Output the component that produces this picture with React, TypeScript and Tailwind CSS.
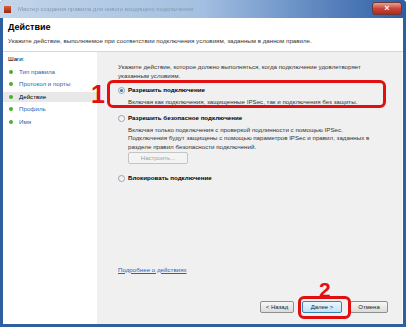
import React from 'react'

const steps = [
  { label: 'Тип правила', active: false },
  { label: 'Протокол и порты', active: false },
  { label: 'Действие', active: true },
  { label: 'Профиль', active: false },
  { label: 'Имя', active: false },
]

function Radio({ checked }: { checked?: boolean }) {
  return (
    <span className="w-[7px] h-[7px] rounded-full border border-[#9aa3ad] bg-gradient-to-br from-[#e8e8e8] to-[#ffffff] flex items-center justify-center shrink-0">
      {checked && <span className="w-[3px] h-[3px] rounded-full bg-[#3a74c4]" />}
    </span>
  )
}

function Btn({ children, primary, disabled }: { children: React.ReactNode; primary?: boolean; disabled?: boolean }) {
  return (
    <div
      className={
        'h-[12px] rounded-[2px] border flex items-center justify-center text-[6px] leading-none ' +
        (primary
          ? 'border-[#3c7fb1] bg-gradient-to-b from-[#eaf6fd] to-[#bee6fd] text-[#222]'
          : disabled
            ? 'border-[#c4c4c4] bg-[#f4f4f4] text-[#a0a0a0]'
            : 'border-[#8e8f8f] bg-gradient-to-b from-[#f6f6f6] to-[#dcdcdc] text-[#222]')
      }
    >
      {children}
    </div>
  )
}

export default function App() {
  return (
    <div className="w-[408px] h-[330px] bg-white relative overflow-hidden" style={{ fontFamily: '"Liberation Sans", Arial, sans-serif' }}>
      <div className="w-[406px] h-[327px] flex flex-col bg-[#2f5f9e] rounded-t-[4px] overflow-hidden">
        {/* title bar */}
        <div className="h-[18px] flex items-center bg-gradient-to-r from-[#c3d6ea] via-[#a3bfe1] to-[#2c5ea6] px-[3px] relative">
          <div className="w-[9px] h-[9px] rounded-[1px] bg-gradient-to-b from-[#e45c3a] to-[#8a2a1a] border border-[#c9d6e4] shrink-0" />
          <span className="ml-[6px] text-[6px] text-[#8797aa] blur-[0.5px] whitespace-nowrap">Мастер создания правила для нового входящего подключения</span>
          <div className="absolute right-[4px] top-[2px] w-[30px] h-[13px] rounded-[3px] border border-[#6b3a3a] bg-gradient-to-b from-[#e8a093] via-[#c9453a] to-[#b52a20] flex items-center justify-center text-white text-[9px] font-bold leading-none">
            ×
          </div>
        </div>

        {/* body */}
        <div className="flex-1 mx-[3px] mb-[3px] bg-white flex flex-col">
          <div className="h-[34px] border-b border-[#d8d8d8] px-[5px] pt-[3px]">
            <div className="text-[9px] font-bold text-black leading-[12px]">Действие</div>
            <div className="text-[6.2px] text-[#333] mt-[4px] leading-[8px] whitespace-nowrap">
              Укажите действие, выполняемое при соответствии подключения условиям, заданным в данном правиле.
            </div>
          </div>

          <div className="flex-1 flex">
            {/* steps */}
            <div className="w-[94px] bg-white pt-[2px]">
              <div className="px-[5px] text-[6.2px] text-black leading-[9px]">Шаги:</div>
              <div className="mt-[4px] flex flex-col gap-[3px]">
                {steps.map((s) => (
                  <div key={s.label} className={'h-[9.5px] flex items-center px-[6px] ' + (s.active ? 'bg-[#e8e8e8]' : '')}>
                    <span className="w-[4px] h-[4px] rounded-full bg-[#4caf2c] mr-[6px]" />
                    <span className={'text-[6.2px] leading-none ' + (s.active ? 'text-black' : 'text-[#2a64b8]')}>{s.label}</span>
                  </div>
                ))}
              </div>
            </div>

            {/* content */}
            <div className="flex-1 bg-[#f0f0f0] border-r border-[#fafafa] flex flex-col pl-[21px] pr-[10px] pt-[11px] pb-[11px] text-[6.2px] text-[#333] leading-[8.5px]">
              <div className="whitespace-nowrap">
                Укажите действие, которое должно выполняться, когда подключение удовлетворяет
                <br />
                указанным условиям.
              </div>

              <div className="mt-[6px] flex items-start gap-[3px]">
                <div className="pt-[1px]"><Radio checked /></div>
                <div className="whitespace-nowrap">
                  <div className="font-bold text-black">Разрешить подключение</div>
                  <div className="mt-[3px]">Включая как подключения, защищенные IPSec, так и подключения без защиты.</div>
                </div>
              </div>

              <div className="mt-[8px] flex items-start gap-[3px]">
                <div className="pt-[1px]"><Radio /></div>
                <div className="whitespace-nowrap">
                  <div className="font-bold text-black">Разрешить безопасное подключение</div>
                  <div className="mt-[3px]">
                    Включая только подключения с проверкой подлинности с помощью IPSec.
                    <br />
                    Подключения будут защищены с помощью параметров IPSec и правил, заданных в
                    <br />
                    разделе правил безопасности подключений.
                  </div>
                  <div className="mt-[1px] w-[60px]">
                    <Btn disabled>Настроить...</Btn>
                  </div>
                </div>
              </div>

              <div className="mt-[10px] flex items-start gap-[3px]">
                <div className="pt-[1px]"><Radio /></div>
                <div className="font-bold text-black">Блокировать подключение</div>
              </div>

              <div className="flex-1" />
              <div className="text-[#2a64b8] underline">Подробнее о действиях</div>

              <div className="mt-[27px] flex justify-end gap-[8px] pr-[4px]">
                <div className="w-[34px]"><Btn>&lt; Назад</Btn></div>
                <div className="w-[40px]"><Btn primary>Далее &gt;</Btn></div>
                <div className="w-[38px]"><Btn>Отмена</Btn></div>
              </div>
            </div>
          </div>
        </div>
      </div>

      {/* annotations */}
      <div className="absolute left-[107px] top-[80px] w-[279px] h-[28px] border-[3px] border-[#e10f0f] rounded-[6px]" />
      <div className="absolute left-[91px] top-[82px] text-[#e10f0f] text-[25px] font-bold leading-none">1</div>
      <div className="absolute left-[298px] top-[296px] w-[53px] h-[23px] border-[3px] border-[#e10f0f] rounded-[6px]" />
      <div className="absolute left-[319px] top-[279px] text-[#e10f0f] text-[21px] font-bold leading-none">2</div>
    </div>
  )
}
